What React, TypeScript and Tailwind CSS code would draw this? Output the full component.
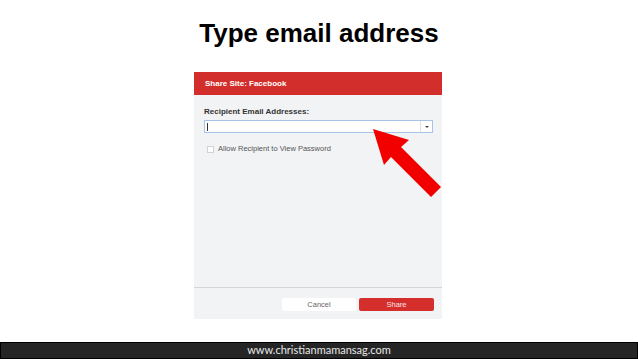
import React from "react";

export default function App() {
  return (
    <div
      className="relative w-[638px] h-[359px] bg-white flex flex-col items-center overflow-hidden"
      style={{ fontFamily: '"Liberation Sans", Arial, sans-serif' }}
    >
      <div className="mt-[18px] text-[26px] leading-[30px] font-bold text-black">
        Type email address
      </div>

      <div className="mt-[24px] ml-[-2px] w-[248px] h-[247px] flex flex-col bg-[#f2f3f5]">
        <div className="h-[23px] bg-[#d22f2c] pl-[11px] flex items-center text-[8px] font-bold text-white">
          Share Site: Facebook
        </div>
        <div className="flex-1 pl-[10px] pr-[9px] pt-[12px] flex flex-col">
          <div className="text-[8px] leading-[10px] font-bold text-[#333]">
            Recipient Email Addresses:
          </div>
          <div className="mt-[3px] h-[13px] w-[229px] border border-[#a9c3e6] bg-white flex items-center">
            <div className="w-px h-[8px] bg-[#333] ml-[2px]" />
            <div className="flex-1" />
            <div className="w-[12px] h-full border-l border-[#dde1e6] flex items-center justify-center">
              <div className="w-0 h-0 border-l-[2px] border-r-[2px] border-t-[2px] border-l-transparent border-r-transparent border-t-[#444]" />
            </div>
          </div>
          <div className="mt-[12px] flex items-center">
            <div className="w-[7px] h-[7px] ml-[3px] border border-[#d0d4d9] bg-white" />
            <div className="ml-[4px] text-[7.5px] leading-[8px] text-[#555]">
              Allow Recipient to View Password
            </div>
          </div>
        </div>
        <div className="h-[32px] border-t border-[#d6d6d6] flex justify-end items-start pt-[10px] pr-[8px] gap-[3px]">
          <div className="w-[74px] h-[13px] rounded-[2px] bg-white flex items-center justify-center text-[7.5px] text-[#666]">
            Cancel
          </div>
          <div className="w-[75px] h-[13px] rounded-[2px] bg-[#d42f2d] flex items-center justify-center text-[7.5px] text-[#fbe3e3]">
            Share
          </div>
        </div>
      </div>

      <div
        className="mt-auto w-full h-[17px] bg-[#252525] border border-black flex items-center justify-center text-[11px] text-[#e8e8e8]"
        style={{ fontFamily: 'Lato, "Open Sans", sans-serif' }}
      >
        www.christianmamansag.com
      </div>

      <svg
        className="absolute left-0 top-0"
        width="638"
        height="359"
        viewBox="0 0 638 359"
      >
        <polygon
          points="373,129 409,140 401,147 441,187 431,197 391,157 384,165"
          fill="#f20000"
        />
      </svg>
    </div>
  );
}
